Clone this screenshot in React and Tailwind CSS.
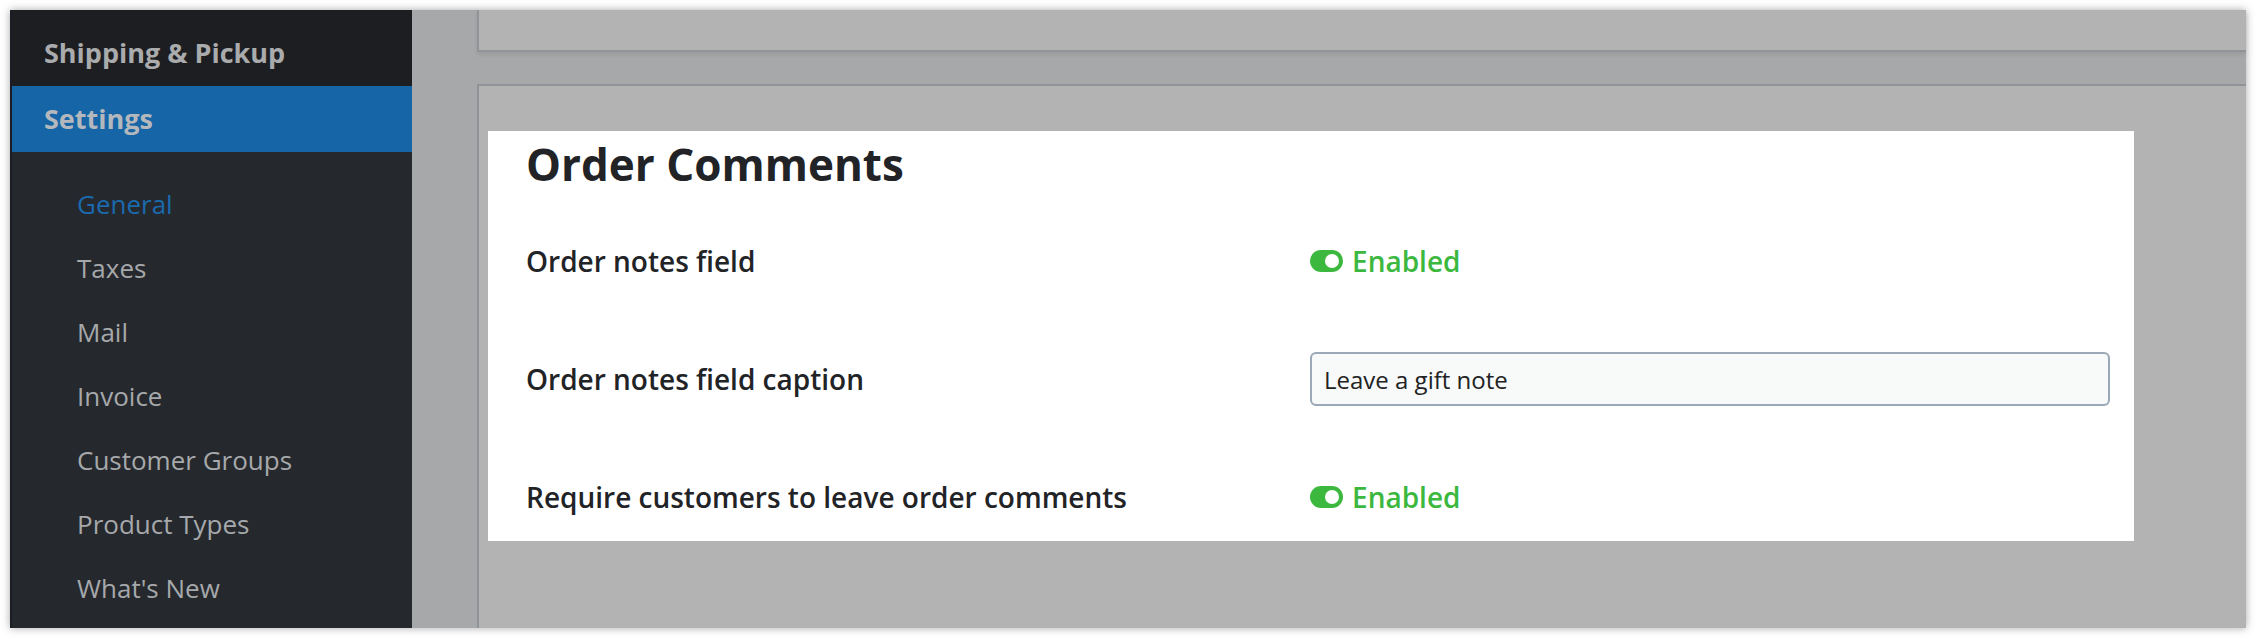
const subItems = ["General", "Taxes", "Mail", "Invoice", "Customer Groups", "Product Types", "What's New"];

const Toggle = () => (
    <div className="flex items-center gap-[9px]">
        <div className="w-[33px] h-[22px] rounded-full bg-[#3db83f] flex items-center justify-end pr-[4px]">
            <div className="w-[14px] h-[14px] rounded-full bg-white" />
        </div>
        <span className="text-[28px] leading-[36px] font-semibold text-[#3db83f]">Enabled</span>
    </div>
);

const Row = ({ label, children }) => (
    <div className="flex items-center h-[56px]">
        <div className="w-[784px] shrink-0 text-[28px] leading-[36px] font-semibold text-[#222326]">{label}</div>
        <div className="flex-1 flex items-center">{children}</div>
    </div>
);

const App = () => {
    return (
        <div className="bg-white p-[10px] w-[2256px] h-[638px] font-['Open_Sans',sans-serif]">
            <div className="flex w-[2236px] h-[618px] shadow-[0_0_8px_rgba(0,0,0,0.35)]">
                {/* Sidebar */}
                <div className="w-[402px] shrink-0 bg-[#25282d] border-l-2 border-[#1a1d24] flex flex-col">
                    <div className="h-[76px] pt-[10px] pl-[32px] flex items-center bg-[#1d1e22] text-[27px] leading-[40px] font-bold text-[#a9abad]">
                        Shipping &amp; Pickup
                    </div>
                    <div className="h-[66px] pl-[32px] flex items-center bg-[#1565a7] text-[27px] leading-[40px] font-bold text-[#b4b8bd]">
                        Settings
                    </div>
                    <div className="pt-[20px] flex flex-col">
                        {subItems.map((item, i) => (
                            <div
                                key={item}
                                className={`h-[64px] pl-[65px] flex items-center text-[26px] leading-[36px] ${i === 0 ? "text-[#1a6aad]" : "text-[#a6a8ab]"}`}
                            >
                                {item}
                            </div>
                        ))}
                    </div>
                </div>

                {/* Main area */}
                <div className="flex-1 bg-[#a7a8aa] pl-[65px] flex flex-col">
                    <div className="h-[42px] bg-[#b3b3b3] border-l-2 border-b-2 border-[#909499] shadow-[0_3px_4px_rgba(0,0,0,0.08)]" />
                    <div className="mt-[32px] flex-1 bg-[#b3b3b3] border-l-2 border-t-2 border-[#909499] pt-[45px] pl-[9px]">
                        <div className="w-[1646px] h-[410px] bg-white pt-[7px] pl-[38px] pr-[24px]">
                            <h2 className="text-[44px] leading-[52px] font-bold text-[#222326]">Order Comments</h2>
                            <div className="mt-[43px] flex flex-col gap-[62px]">
                                <Row label="Order notes field">
                                    <Toggle />
                                </Row>
                                <Row label="Order notes field caption">
                                    <input
                                        type="text"
                                        defaultValue="Leave a gift note"
                                        className="w-full h-[54px] rounded-[6px] border-2 border-[#9ba8b5] bg-[#f8fafa] pl-[12px] text-[24px] text-[#222] outline-none font-['Open_Sans',sans-serif]"
                                    />
                                </Row>
                                <Row label="Require customers to leave order comments">
                                    <Toggle />
                                </Row>
                            </div>
                        </div>
                    </div>
                </div>
            </div>
        </div>
    );
};

export default App;
